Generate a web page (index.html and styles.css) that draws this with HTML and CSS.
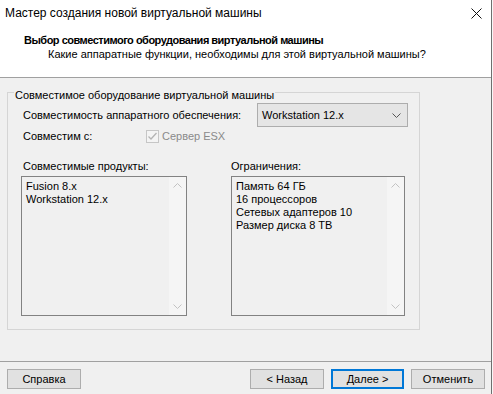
FILE: index.html
```html
<!DOCTYPE html>
<html lang="ru">
<head>
<meta charset="utf-8">
<title>Мастер создания новой виртуальной машины</title>
<link rel="stylesheet" href="styles.css">
</head>
<body>
<div class="window">
  <header class="header">
    <div class="titlebar">
      <span class="title">Мастер создания новой виртуальной машины</span>
      <svg class="close" width="11" height="11" viewBox="0 0 11 11"><path d="M0.5 0.5 L10.5 10.5 M10.5 0.5 L0.5 10.5" stroke="#111" stroke-width="1" fill="none"/></svg>
    </div>
    <div class="heading">Выбор совместимого оборудования виртуальной машины</div>
    <div class="subheading">Какие аппаратные функции, необходимы для этой виртуальной машины?</div>
  </header>
  <main class="main">
    <fieldset class="group">
      <legend class="legend">Совместимое оборудование виртуальной машины</legend>
      <div class="row row-hw">
        <span class="label">Совместимость аппаратного обеспечения:</span>
        <div class="combo">
          <span class="combo-text">Workstation 12.x</span>
          <svg class="chev" width="9" height="5" viewBox="0 0 9 5"><path d="M0.5 0.5 L4.5 4.5 L8.5 0.5" stroke="#555" fill="none"/></svg>
        </div>
      </div>
      <div class="row row-compat">
        <span class="label label-compat">Совместим с:</span>
        <span class="check">
          <svg width="13" height="13" viewBox="0 0 13 13"><rect x="0.5" y="0.5" width="12" height="12" fill="#f4f4f4" stroke="#c6c6c6"/><path d="M2.5 6.5 L5 9 L10.5 3" stroke="#b4b4b4" stroke-width="1.3" fill="none"/></svg>
        </span>
        <span class="check-label">Сервер ESX</span>
      </div>
      <div class="columns">
        <div class="col col-left">
          <div class="label col-label">Совместимые продукты:</div>
          <div class="list">
            <div class="items">
              <div>Fusion 8.x</div>
              <div>Workstation 12.x</div>
            </div>
            <div class="scroll">
              <svg width="9" height="5" viewBox="0 0 9 5"><path d="M0.5 4.5 L4.5 0.5 L8.5 4.5" stroke="#c2c2c2" fill="none"/></svg>
              <svg width="9" height="5" viewBox="0 0 9 5"><path d="M0.5 0.5 L4.5 4.5 L8.5 0.5" stroke="#c2c2c2" fill="none"/></svg>
            </div>
          </div>
        </div>
        <div class="col col-right">
          <div class="label col-label col-label-right">Ограничения:</div>
          <div class="list list-right">
            <div class="items">
              <div>Память 64 ГБ</div>
              <div>16 процессоров</div>
              <div>Сетевых адаптеров 10</div>
              <div>Размер диска 8 ТВ</div>
            </div>
            <div class="scroll">
              <svg width="9" height="5" viewBox="0 0 9 5"><path d="M0.5 4.5 L4.5 0.5 L8.5 4.5" stroke="#c2c2c2" fill="none"/></svg>
              <svg width="9" height="5" viewBox="0 0 9 5"><path d="M0.5 0.5 L4.5 4.5 L8.5 0.5" stroke="#c2c2c2" fill="none"/></svg>
            </div>
          </div>
        </div>
      </div>
    </fieldset>
  </main>
  <footer class="footer">
    <button class="btn" type="button">Справка</button>
    <div class="footer-right">
      <button class="btn" type="button">&lt; Назад</button>
      <button class="btn btn-default" type="button">Далее &gt;</button>
      <button class="btn btn-cancel" type="button">Отменить</button>
    </div>
  </footer>
</div>
</body>
</html>
```

FILE: styles.css
```css
html, body {
  margin: 0;
  padding: 0;
}
body {
  width: 493px;
  height: 394px;
  background: #f7f7f7;
  font-family: "Liberation Sans", Arial, sans-serif;
  font-size: 11px;
  color: #000;
  overflow: hidden;
}
.window {
  width: 491px;
  height: 394px;
  border-right: 1px solid #6f6f6f;
  background: #f0f0f0;
  display: flex;
  flex-direction: column;
}
.header {
  background: #fff;
  height: 77px;
  border-bottom: 1px solid #a0a0a0;
  box-sizing: content-box;
}
.titlebar {
  height: 26px;
  display: flex;
  align-items: center;
  padding-left: 5px;
  padding-right: 9px;
}
.title {
  flex: 1;
  font-size: 12px;
  line-height: 16px;
}
.close {
  display: block;
}
.heading {
  font-weight: bold;
  letter-spacing: -0.5px;
  padding-left: 24px;
  line-height: 14px;
  margin-top: 7px;
}
.subheading {
  padding-left: 48px;
  line-height: 14px;
}
.main {
  height: 283px;
  padding: 4px 0 0 7px;
  box-sizing: border-box;
}
.group {
  width: 413px;
  box-sizing: border-box;
  margin: 0;
  border: 1px solid #d5d5d5;
  padding: 0 11px 13px 13px;
  min-width: 0;
}
.legend {
  padding: 6px 1px 0;
  margin-left: -7px;
  line-height: 14px;
}
.label {
  padding-left: 2px;
  line-height: 14px;
}
.row {
  display: flex;
  align-items: center;
}
.row-hw {
  margin-top: 1px;
  height: 24px;
  justify-content: space-between;
}
.combo {
  width: 151px;
  height: 24px;
  box-sizing: border-box;
  border: 1px solid #adadad;
  background: #e5e5e5;
  display: flex;
  align-items: center;
  justify-content: space-between;
  padding: 0 6px 0 4px;
}
.row-compat {
  margin-top: 1px;
  height: 16px;
}
.label-compat {
  width: 123px;
}
.check {
  width: 13px;
  height: 13px;
  display: block;
}
.check svg {
  display: block;
}
.check-label {
  margin-left: 3px;
  color: #8a8a8a;
  line-height: 14px;
}
.columns {
  display: flex;
  justify-content: space-between;
  margin-top: 15px;
}
.col-left {
  width: 166px;
}
.col-right {
  width: 174px;
  margin-right: 3px;
}
.col-label-right {
  padding-left: 0;
}
.col-label {
  margin-bottom: 3px;
}
.list {
  height: 140px;
  box-sizing: border-box;
  border: 1px solid #828282;
  background: #f0f0f0;
  display: flex;
}
.items {
  flex: 1;
  padding: 3px 0 0 4px;
  line-height: 13px;
}
.scroll {
  width: 17px;
  background: #f5f5f5;
  display: flex;
  flex-direction: column;
  justify-content: space-between;
  align-items: center;
  padding: 6px 0 6px;
}
.scroll svg {
  display: block;
}
.footer {
  border-top: 1px solid #a0a0a0;
  flex: 1;
  display: flex;
  justify-content: space-between;
  align-items: flex-start;
  padding: 7px 6px 0 7px;
}
.footer-right {
  display: flex;
  gap: 7px;
}
.btn {
  width: 74px;
  height: 20px;
  box-sizing: border-box;
  border: 1px solid #adadad;
  background: #e1e1e1;
  font-family: inherit;
  font-size: 11px;
  color: #000;
  padding: 0;
  margin: 0;
  line-height: 16px;
}
.btn-default {
  border: 2px solid #0078d7;
  width: 73px;
}
```
